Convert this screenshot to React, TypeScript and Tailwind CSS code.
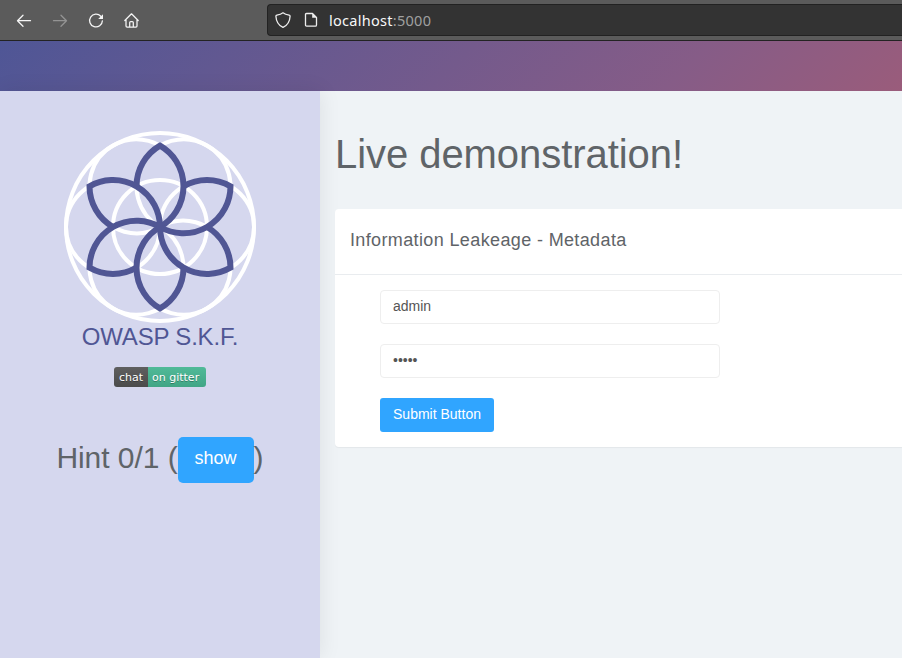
const PETAL = "M136.5 186.3A47 47 0 0 1 160 145.6A47 47 0 0 1 160 227";

function Logo() {
  const angles = [0, 60, 120, 180, 240, 300];
  return (
    <svg className="block h-48 w-48" viewBox="64 131 192 192" fill="none">
      <g stroke="#fff" strokeWidth="4">
        <circle cx="160" cy="227" r="94" />
        <circle cx="160" cy="227" r="47" />
        {angles.map((a) => (
          <circle key={a} cx="207" cy="227" r="47" transform={`rotate(${a} 160 227)`} />
        ))}
      </g>
      <g stroke="#505694" strokeWidth="6" strokeLinejoin="miter">
        {angles.map((a) => (
          <path key={a} d={PETAL} transform={`rotate(${a} 160 227)`} />
        ))}
      </g>
    </svg>
  );
}

function BrowserBar() {
  return (
    <header className="flex h-[41px] shrink-0 items-start border-b border-[#232323] bg-[#5b5b5b]">
      <div className="flex w-[267px] shrink-0 gap-5 pt-[13px] pl-4 text-[#f5f5f5]">
        <svg className="h-4 w-4" viewBox="0 0 16 16" fill="none" stroke="currentColor" strokeWidth="1.3" strokeLinecap="round" strokeLinejoin="round">
          <path d="M14.5 7.7H1.6M7 2.2L1.5 7.7L7 13.2" />
        </svg>
        <svg className="h-4 w-4 text-[#949494]" viewBox="0 0 16 16" fill="none" stroke="currentColor" strokeWidth="1.3" strokeLinecap="round" strokeLinejoin="round">
          <path d="M1.5 7.7H14.4M9 2.2L14.5 7.7L9 13.2" />
        </svg>
        <svg className="h-4 w-4" viewBox="0 0 16 16" fill="none" stroke="currentColor" strokeWidth="1.3" strokeLinecap="round">
          <path d="M12.8 3.3A6.4 6.4 0 1 0 14.4 7.8" />
          <path d="M15 1.2V6H10.2Z" fill="currentColor" stroke="none" />
        </svg>
        <svg className="h-4 w-4" viewBox="0 0 16 16" fill="none" stroke="currentColor" strokeWidth="1.25" strokeLinecap="round" strokeLinejoin="round">
          <path d="M.8 7.5L7.5 .8L14.2 7.5M2 6.5V13.1Q2 14.2 3.1 14.2H11.9Q13 14.2 13 13.1V6.5M5.7 14V9.6Q5.7 8.6 6.7 8.6H8.3Q9.3 8.6 9.3 9.6V14" />
        </svg>
      </div>
      <div className="mt-1 flex h-8 flex-1 items-center rounded-l-[4px] border border-r-0 border-[#222] bg-[#333] pl-[7px] text-[#eee]">
        <svg className="h-4 w-4" viewBox="0 0 16 16" fill="none" stroke="currentColor" strokeWidth="1.3" strokeLinejoin="round">
          <path d="M8 .8C6.4 2.1 4 2.9 1.9 3.2C1.2 3.3 .9 3.6 .9 4.2C1.2 9.3 3.4 13.3 8 15.4C12.6 13.3 14.8 9.3 15.1 4.2C15.1 3.6 14.8 3.3 14.1 3.2C12 2.9 9.6 2.1 8 .8Z" />
        </svg>
        <svg className="ml-3 h-4 w-4" viewBox="0 0 16 16" fill="none" stroke="currentColor" strokeWidth="1.3" strokeLinejoin="round">
          <path d="M3.5 1.5H9.5L13.5 5.5V13Q13.5 14.2 12.3 14.2H3.7Q2.5 14.2 2.5 13V2.6Q2.5 1.5 3.5 1.5Z" />
          <path d="M9.2 1.5V5.8H13.5Z" fill="currentColor" stroke="none" />
        </svg>
        <span className="ml-[10px] font-['Noto_Sans',sans-serif] text-[14.5px] leading-5 tracking-[0.28px] text-[#f8f8f8]">
          localhost<span className="text-[#a0a0a0]">:5000</span>
        </span>
      </div>
    </header>
  );
}

export default function App() {
  return (
    <div className="flex h-[658px] w-[902px] flex-col overflow-hidden bg-[#eff3f6] font-['Liberation_Sans',Arial,sans-serif] text-[#5f6468]">
      <BrowserBar />
      <div className="h-[50px] shrink-0 bg-[linear-gradient(135deg,#4f5696_0%,#865c87_75%,#9a5c7b_100%)]" />
      <div className="flex min-h-0 flex-1">
        <aside className="flex w-80 shrink-0 flex-col items-center bg-[#d5d7ee] pt-10 shadow-[1px_0_20px_rgba(0,0,0,0.08)]">
          <Logo />
          <div className="text-2xl leading-7 tracking-[-0.2px] text-[#505694]">OWASP S.K.F.</div>
          <div className="mt-4 flex h-5 w-[92px] overflow-hidden rounded-[3px] font-['DejaVu_Sans',sans-serif] text-[11px] leading-[21px] text-white [text-shadow:0_1px_0_rgba(1,1,1,0.3)]">
            <span className="w-[34px] bg-linear-to-b from-[#5f5f5f] to-[#4b4b4b] pl-[5px]">chat</span>
            <span className="w-[58px] bg-linear-to-b from-[#50ba98] to-[#41a585] pl-1 whitespace-nowrap">on gitter</span>
          </div>
          <div className="mt-[50px] flex h-[46px] text-[30px] leading-[42px]">
            <span className="tracking-[-0.05px] whitespace-pre">Hint 0/1 (</span>
            <button className="h-[46px] w-[76px] rounded-[5px] bg-[#30a5ff] pb-[5px] text-lg leading-6 text-white">show</button>
            <span>)</span>
          </div>
        </aside>
        <main className="min-w-0 flex-1 pt-10 pl-[15px]">
          <h1 className="text-[40px] leading-[46px] tracking-[-0.06px] whitespace-nowrap">Live demonstration!</h1>
          <section className="mt-8 h-[238px] rounded-l-[4px] bg-white shadow-[0_1px_1px_rgba(0,0,0,0.05)]">
            <h2 className="h-[66px] border-b border-[#e9ecef] pt-[18px] pl-[15px] text-lg leading-[26px] tracking-[0.37px]">Information Leakeage - Metadata</h2>
            <form className="flex flex-col items-start gap-5 pt-[15px] pl-[45px] text-sm">
              <div className="h-[34px] w-[340px] rounded-[4px] border border-[#eee] px-3 leading-[31px] text-[#555]">admin</div>
              <div className="h-[34px] w-[340px] rounded-[4px] border border-[#eee] px-3 leading-[31px] text-[#555]">•••••</div>
              <button type="button" className="h-[34px] w-[114px] rounded-[3px] bg-[#30a5ff] pb-[2px] whitespace-nowrap text-white">Submit Button</button>
            </form>
          </section>
        </main>
      </div>
    </div>
  );
}
